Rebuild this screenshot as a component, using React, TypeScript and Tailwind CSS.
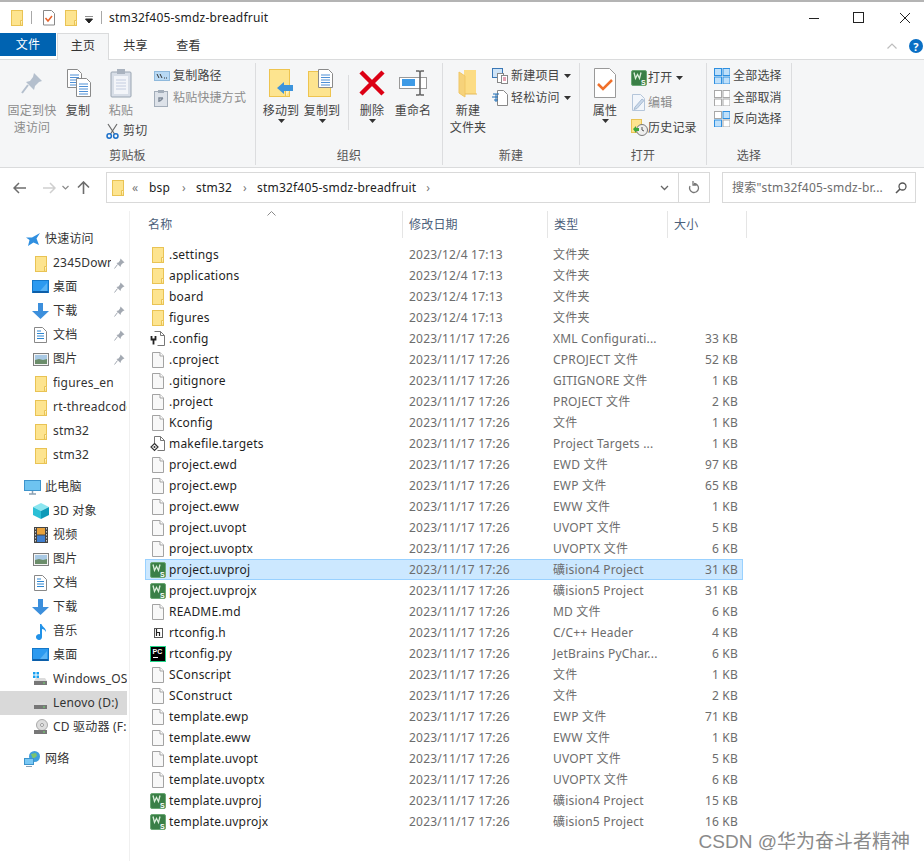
import React from 'react'

const Folder = () => (
  <svg width="14" height="17" viewBox="0 0 14 17">
    <rect x="1.5" y="1.5" width="11" height="15" fill="#fde48f" stroke="#e9c354" />
    <path d="M10.5 16.5v-5h2" fill="#fff3c4" stroke="#e9c354" />
  </svg>
)

const FileIco = () => (
  <svg width="14" height="17" viewBox="0 0 14 17">
    <path d="M1.5 1.5h7.5l3.5 3.5v11.5h-11z" fill="#f8f8f8" stroke="#a3a3a3" />
    <path d="M9 1.5v3.5h3.5" fill="#fff" stroke="#a3a3a3" />
  </svg>
)

const ConfigIco = () => (
  <svg width="16" height="17" viewBox="0 0 16 17">
    <path d="M4.5 1.5h6l4 4v10h-7" fill="#fff" stroke="#777" />
    <path d="M10.5 1.5v4h4" fill="none" stroke="#777" />
    <path d="M1.5 6v3.5h4V6M3.5 9.5v5" fill="none" stroke="#222" strokeWidth="1.8" />
  </svg>
)

const MakeIco = () => (
  <svg width="16" height="17" viewBox="0 0 16 17">
    <path d="M4.5 8V1.5h6l4 4v10h-7" fill="#fff" stroke="#777" />
    <path d="M10.5 1.5v4h4" fill="none" stroke="#777" />
    <path d="M4.5 8.5l3.5 3.5-3.5 3.5-3.5-3.5z" fill="#fff" stroke="#333" strokeWidth="1.2" />
    <circle cx="4.5" cy="12" r="1" fill="#333" />
  </svg>
)

const HeaderIco = () => (
  <svg width="14" height="17" viewBox="0 0 14 17">
    <rect x="3.5" y="4.5" width="8" height="9" fill="#fff" stroke="#555" />
    <path d="M5.5 5v7M5.5 8.5h3v3.5" fill="none" stroke="#222" strokeWidth="1.2" />
  </svg>
)

const PcIco = () => (
  <svg width="16" height="16" viewBox="0 0 16 16">
    <rect x="0.5" y="0.5" width="15" height="15" fill="#000" stroke="#21d789" />
    <text x="2.5" y="8" fontSize="7" fontWeight="700" fill="#fff" fontFamily="Liberation Sans">PC</text>
    <rect x="3" y="11" width="5" height="1" fill="#fff" />
  </svg>
)

const KeilIco = () => (
  <svg width="16" height="16" viewBox="0 0 16 16">
    <rect x="0.5" y="0.5" width="15" height="15" rx="1.5" fill="#3a7f46" stroke="#6aa874" />
    <path d="M3 2.5l1.500 6 2-4 2 4 1.500-6" fill="none" stroke="#dcefdc" strokeWidth="1.300" />
    <text x="10" y="14.500" fontSize="7" fontWeight="700" fill="#fff" fontFamily="Liberation Sans">S</text>
  </svg>
)

const SmallFolderBig = ({ children }: { children?: React.ReactNode }) => (
  <svg width="30" height="30" viewBox="0 0 30 30">
    <rect x="3.5" y="1.5" width="20" height="27" fill="#fde48f" stroke="#eec44f" />
    <path d="M19.5 28.5v-6h4" fill="#fff3c4" stroke="#eec44f" />
    {children}
  </svg>
)

const Pin = ({ color = '#b4bfcd', size = 22 }: { color?: string; size?: number }) => (
  <svg width={size} height={size} viewBox="0 0 22 22">
    <path d="M13 1l8 8-3 1-4 4-1 4-8-8 4-1 3-4z" fill={color} />
    <path d="M7 13l-6 8" stroke={color} strokeWidth="2" />
  </svg>
)

const TinyPin = () => <Pin color="#a3a9b2" size={11} />

const PageLines = ({ x, y }: { x: number; y: number }) => (
  <g transform={`translate(${x} ${y})`}>
    <path d="M.5.5h10l4 4v14H.5z" fill="#fff" stroke="#8a8a8a" />
    <path d="M3 6h9M3 8.5h9M3 11h9M3 13.5h9M3 16h9" stroke="#4d8fd6" />
  </g>
)

const CopyIco = () => (
  <svg width="26" height="30" viewBox="0 0 26 30" className="ml-[2px]">
    <PageLines x={1} y={1} />
    <PageLines x={10} y={10} />
  </svg>
)

const PasteIco = () => (
  <svg width="22" height="30" viewBox="0 0 22 30">
    <rect x="1" y="4" width="20" height="25" rx="1" fill="#d8dee7" stroke="#9aa5b2" />
    <rect x="4" y="8" width="14" height="18" fill="#f3f5f9" />
    <path d="M6 12h10M6 15h10M6 18h10M6 21h10" stroke="#c4cde0" />
    <rect x="7" y="1" width="8" height="5" fill="#aab3bf" />
  </svg>
)

const Scissors = () => (
  <svg width="13" height="16" viewBox="0 0 13 16" className="shrink-0">
    <path d="M2 1l6.5 10M11 1L4.5 11" stroke="#6b6b6b" strokeWidth="1.2" fill="none" />
    <circle cx="3.2" cy="13" r="2.2" fill="none" stroke="#1a6fc9" strokeWidth="1.5" />
    <circle cx="9.8" cy="13" r="2.2" fill="none" stroke="#1a6fc9" strokeWidth="1.5" />
  </svg>
)

const PathIco = () => (
  <svg width="16" height="10" viewBox="0 0 16 10">
    <rect x=".5" y=".5" width="15" height="9" fill="#b8d9f4" stroke="#8fb9dc" />
    <path d="M3 3l2 4M6 3l2 4" stroke="#333" />
    <path d="M10 7h1M12 7h1" stroke="#333" />
  </svg>
)

const ShortcutIco = () => (
  <svg width="14" height="17" viewBox="0 0 14 17">
    <rect x=".5" y="1.5" width="13" height="15" fill="#dde2e9" stroke="#a3adb9" />
    <rect x="4" y="0" width="6" height="3" fill="#a3adb9" />
    <path d="M5 12V8h4M9 8L6 11" stroke="#7f8a98" strokeWidth="1.5" fill="none" />
  </svg>
)

const MoveIco = () => (
  <SmallFolderBig>
    <path d="M11 20l7-6v3h9v6h-9v3z" fill="#3d94dc" />
  </SmallFolderBig>
)

const CopyToIco = () => (
  <svg width="30" height="30" viewBox="0 0 30 30">
    <rect x="1.5" y="3.5" width="22" height="25" fill="#fde48f" stroke="#eec44f" />
    <PageLines x={11} y={1} />
  </svg>
)

const DeleteIco = () => (
  <svg width="28" height="28" viewBox="0 0 28 28">
    <path d="M3 3l22 22M25 3L3 25" stroke="#dc0014" strokeWidth="4.5" />
  </svg>
)

const RenameIco = () => (
  <svg width="30" height="28" viewBox="0 0 30 28">
    <rect x="1.5" y="8.5" width="27" height="11" fill="#fff" stroke="#999" />
    <rect x="4" y="10" width="13" height="7" fill="#3f9be6" />
    <path d="M18 2h3l1 1 1-1h3M22 3v22M18 26h3l1-1 1 1h3" fill="none" stroke="#666" strokeWidth="1.6" />
  </svg>
)

const NewFolderIco = () => (
  <svg width="20" height="30" viewBox="0 0 20 30">
    <path d="M6 2h12v24H6z" fill="#fcdc84" />
    <path d="M1 4l6 4v21l-6-4z" fill="#f6d27a" stroke="#f0c766" />
    <path d="M7 26h12" stroke="#e6bb5b" />
  </svg>
)

const NewItemIco = () => (
  <svg width="16" height="16" viewBox="0 0 16 16">
    <rect x=".5" y=".5" width="10" height="9" fill="#cfe4f7" stroke="#3a77b5" />
    <rect x="5.5" y="5.5" width="6" height="9" fill="#fff" stroke="#888" />
    <rect x="9.5" y="7.5" width="6" height="8" fill="#fff" stroke="#888" />
    <path d="M11 10h3M11 12h3" stroke="#c46" />
  </svg>
)

const EasyIco = () => (
  <svg width="16" height="16" viewBox="0 0 16 16">
    <path d="M5.5.5h6l4 4v11h-10z" fill="#fff" stroke="#888" />
    <path d="M1 4h6M0 7h6M2 10h4M4 4v8" stroke="#1d6cb5" />
  </svg>
)

const PropIco = () => (
  <svg width="22" height="30" viewBox="0 0 22 30">
    <path d="M.5.5h15l6 6v23H.5z" fill="#fff" stroke="#999" />
    <path d="M4 16l5 5 9-9" fill="none" stroke="#f0702a" strokeWidth="2.5" />
  </svg>
)

const EditIco = () => (
  <svg width="15" height="17" viewBox="0 0 15 17">
    <path d="M1.5.5h8l4 4v12h-12z" fill="#f2f6fb" stroke="#b5c6da" />
    <path d="M4 13l7-8 2 1.5-7 8-3 1z" fill="#c9d8ea" stroke="#a9bdd4" />
  </svg>
)

const HistoryIco = () => (
  <svg width="17" height="17" viewBox="0 0 17 17">
    <rect x=".5" y=".5" width="10" height="13" fill="#fde48f" stroke="#e9c354" />
    <circle cx="11" cy="11" r="5.5" fill="#eee" stroke="#777" />
    <path d="M11 8v3l2 1" fill="none" stroke="#555" />
    <path d="M2 10l3-3v2h3v3H5v2z" fill="#3ca63c" />
  </svg>
)

const Grid4 = ({ on }: { on: boolean[] }) => (
  <svg width="16" height="16" viewBox="0 0 16 16">
    {[[0, 0], [8.5, 0], [0, 8.5], [8.5, 8.5]].map(([x, y], i) => (
      <rect
        key={i}
        x={x + 0.5}
        y={y + 0.5}
        width="7"
        height="7"
        fill={on[i] ? '#bfe0fa' : '#fff'}
        stroke={on[i] ? '#2e8fe0' : '#a8a8a8'}
      />
    ))}
  </svg>
)

const Caret = () => (
  <svg width="7" height="4" viewBox="0 0 7 4" className="shrink-0">
    <path d="M0 0h7L3.5 4z" fill="#333" />
  </svg>
)

// 侧边栏图标
const Star = () => (
  <svg width="15" height="15" viewBox="0 0 15 15" className="ml-[2px]">
    <path d="M14 1l-3.5 5.5L13 13l-5.5-2.5L2 14l1.5-6L0 5.5h6z" fill="#2f8fe0" />
  </svg>
)
const Desktop = () => (
  <svg width="17" height="14" viewBox="0 0 17 14" className="shrink-0">
    <rect x=".5" y=".5" width="16" height="12" fill="#2c9af0" stroke="#1477c8" />
    <path d="M1 12h15" stroke="#0d5ea8" strokeWidth="2" />
    <path d="M8 11l7-8v8z" fill="#5ab4f5" />
  </svg>
)
const Download = () => (
  <svg width="17" height="16" viewBox="0 0 17 16" className="shrink-0">
    <path d="M6 0h5v8h6l-8.500 8L0 8h6z" fill="#3c8fdc" />
  </svg>
)
const DocIco = () => (
  <svg width="13" height="16" viewBox="0 0 13 16">
    <path d="M.5.5h8l4 4v11H.5z" fill="#fff" stroke="#888" />
    <path d="M3 4h4M3 6.500h7M3 9h7M3 11.500h7" stroke="#2e86d1" />
  </svg>
)
const PicIco = () => (
  <svg width="16" height="13" viewBox="0 0 16 13">
    <rect x=".5" y=".5" width="15" height="12" fill="#f4f4f4" stroke="#808080" />
    <rect x="2" y="2" width="12" height="5" fill="#a9c9e4" />
    <path d="M2 7l4-1 4 1 4-1v5H2z" fill="#6b8d6a" />
  </svg>
)
const PcMonitor = () => (
  <svg width="17" height="15" viewBox="0 0 17 15">
    <rect x=".5" y=".5" width="16" height="10" fill="#6ec3f0" stroke="#3d94cc" />
    <path d="M5 14h7M8.500 11v3" stroke="#8aa0b3" strokeWidth="1.500" />
  </svg>
)
const Cube = () => (
  <svg width="16" height="16" viewBox="0 0 16 16">
    <path d="M8 0l8 4-8 4-8-4z" fill="#8ce6f0" />
    <path d="M0 4l8 4v8l-8-4z" fill="#2bbfd6" />
    <path d="M16 4l-8 4v8l8-4z" fill="#0e9ab8" />
  </svg>
)
const Film = () => (
  <svg width="14" height="16" viewBox="0 0 14 16">
    <rect width="14" height="16" fill="#444" />
    <rect x="3" y="1" width="8" height="6.500" fill="#e8a23c" />
    <rect x="3" y="8.500" width="8" height="6.500" fill="#3f7fd0" />
    <path d="M1.500 1v14M12.500 1v14" stroke="#ccc" strokeDasharray="1.500 1.500" />
  </svg>
)
const Note = () => (
  <svg width="12" height="17" viewBox="0 0 12 17">
    <path d="M5 1h1.500c.5 3 5 4 4.500 8-1-2-2.500-3-4-3v8a3 3 0 1 1-2-2.800z" fill="#2192e8" />
  </svg>
)
const Drive = ({ win }: { win?: boolean }) => (
  <svg width="15" height="14" viewBox="0 0 15 14">
    {win && (
      <g fill="#18a0f0">
        <rect x="0" y="0" width="2.500" height="2.500" />
        <rect x="3.500" y="0" width="2.500" height="2.500" />
        <rect x="0" y="3.500" width="2.500" height="2.500" />
        <rect x="3.500" y="3.500" width="2.500" height="2.500" />
      </g>
    )}
    <path d="M1 9l2-3h9l2 3z" fill="#dcdcdc" />
    <rect x="1" y="9" width="13" height="4" fill="#777" />
    <rect x="10" y="10.500" width="2" height="1" fill="#6fdc6f" />
  </svg>
)
const Cd = () => (
  <svg width="15" height="16" viewBox="0 0 15 16">
    <circle cx="9" cy="6" r="5.500" fill="#ddd" stroke="#aaa" />
    <circle cx="9" cy="6" r="1.500" fill="#fff" stroke="#999" />
    <rect x="1" y="11" width="13" height="4" fill="#777" />
    <rect x="10" y="12.500" width="2" height="1" fill="#6fdc6f" />
  </svg>
)
const Network = () => (
  <svg width="17" height="16" viewBox="0 0 17 16">
    <circle cx="10.500" cy="5.500" r="5.500" fill="#3f9fdc" />
    <path d="M7 3l5-1 1 3-4 3z" fill="#7cc46e" />
    <rect x=".5" y="7.500" width="9" height="6" fill="#7ac8f4" stroke="#3d94cc" />
    <path d="M2 15.500h6" stroke="#8aa0b3" />
  </svg>
)

type Row = { name: string; date: string; type: string; size: string; icon: React.ReactNode }

const d1 = '2023/12/4 17:13'
const d2 = '2023/11/17 17:26'
const rows: Row[] = [
  { name: '.settings', date: d1, type: '文件夹', size: '', icon: <Folder /> },
  { name: 'applications', date: d1, type: '文件夹', size: '', icon: <Folder /> },
  { name: 'board', date: d1, type: '文件夹', size: '', icon: <Folder /> },
  { name: 'figures', date: d1, type: '文件夹', size: '', icon: <Folder /> },
  { name: '.config', date: d2, type: 'XML Configurati...', size: '33 KB', icon: <ConfigIco /> },
  { name: '.cproject', date: d2, type: 'CPROJECT 文件', size: '52 KB', icon: <FileIco /> },
  { name: '.gitignore', date: d2, type: 'GITIGNORE 文件', size: '1 KB', icon: <FileIco /> },
  { name: '.project', date: d2, type: 'PROJECT 文件', size: '2 KB', icon: <FileIco /> },
  { name: 'Kconfig', date: d2, type: '文件', size: '1 KB', icon: <FileIco /> },
  { name: 'makefile.targets', date: d2, type: 'Project Targets ...', size: '1 KB', icon: <MakeIco /> },
  { name: 'project.ewd', date: d2, type: 'EWD 文件', size: '97 KB', icon: <FileIco /> },
  { name: 'project.ewp', date: d2, type: 'EWP 文件', size: '65 KB', icon: <FileIco /> },
  { name: 'project.eww', date: d2, type: 'EWW 文件', size: '1 KB', icon: <FileIco /> },
  { name: 'project.uvopt', date: d2, type: 'UVOPT 文件', size: '5 KB', icon: <FileIco /> },
  { name: 'project.uvoptx', date: d2, type: 'UVOPTX 文件', size: '6 KB', icon: <FileIco /> },
  { name: 'project.uvproj', date: d2, type: '礦ision4 Project', size: '31 KB', icon: <KeilIco /> },
  { name: 'project.uvprojx', date: d2, type: '礦ision5 Project', size: '31 KB', icon: <KeilIco /> },
  { name: 'README.md', date: d2, type: 'MD 文件', size: '6 KB', icon: <FileIco /> },
  { name: 'rtconfig.h', date: d2, type: 'C/C++ Header', size: '4 KB', icon: <HeaderIco /> },
  { name: 'rtconfig.py', date: d2, type: 'JetBrains PyChar...', size: '6 KB', icon: <PcIco /> },
  { name: 'SConscript', date: d2, type: '文件', size: '1 KB', icon: <FileIco /> },
  { name: 'SConstruct', date: d2, type: '文件', size: '2 KB', icon: <FileIco /> },
  { name: 'template.ewp', date: d2, type: 'EWP 文件', size: '71 KB', icon: <FileIco /> },
  { name: 'template.eww', date: d2, type: 'EWW 文件', size: '1 KB', icon: <FileIco /> },
  { name: 'template.uvopt', date: d2, type: 'UVOPT 文件', size: '5 KB', icon: <FileIco /> },
  { name: 'template.uvoptx', date: d2, type: 'UVOPTX 文件', size: '6 KB', icon: <FileIco /> },
  { name: 'template.uvproj', date: d2, type: '礦ision4 Project', size: '15 KB', icon: <KeilIco /> },
  { name: 'template.uvprojx', date: d2, type: '礦ision5 Project', size: '16 KB', icon: <KeilIco /> },
]

function BigButton({ width, icon, label, caret, muted }: { width: string; icon: React.ReactNode; label: React.ReactNode; caret?: boolean; muted?: boolean }) {
  return (
    <div className={`flex flex-col items-center shrink-0 ${width}`}>
      <div className="h-[30px] flex items-center justify-center">{icon}</div>
      <div className={`mt-1 text-center leading-[17px] whitespace-nowrap ${muted ? 'text-[#8c8c8c]' : 'text-[#444]'}`}>{label}</div>
      {caret && <Caret />}
    </div>
  )
}

function SmallRow({ icon, label, caret, muted, height = 'h-[22px]', iconWidth = 'w-[19px]' }: { icon: React.ReactNode; label: string; caret?: boolean; muted?: boolean; height?: string; iconWidth?: string }) {
  return (
    <div className={`flex items-center ${height}`}>
      <div className={`flex justify-start shrink-0 ${iconWidth}`}>{icon}</div>
      <span className={`whitespace-nowrap ${muted ? 'text-[#8c8c8c]' : 'text-[#444]'}`}>{label}</span>
      {caret && <span className="ml-[4px]"><Caret /></span>}
    </div>
  )
}

function Group({ width, label, children, border = true }: { width: string; label: string; children: React.ReactNode; border?: boolean }) {
  return (
    <div className={`flex flex-col shrink-0 mt-[3px] h-[102px] ${width} ${border ? 'border-r border-[#dcdddf]' : ''}`}>
      <div className="flex h-[83px] pt-[5px]">{children}</div>
      <div className="text-center leading-[17px] text-[#555] mt-[1px]">{label}</div>
    </div>
  )
}

function NavItem({ icon, label, pin, indent = 2, selected }: { icon: React.ReactNode; label: string; pin?: boolean; indent?: 1 | 2; selected?: boolean }) {
  return (
    <div className={`flex items-center h-6 w-[127px] ${selected ? 'bg-[#d9d9d9]' : ''} ${indent === 1 ? 'pl-[24px]' : 'pl-[32px]'}`}>
      {indent === 1 ? (
        <div className="flex justify-start shrink-0 w-[21px]">{icon}</div>
      ) : (
        <div className="flex justify-center shrink-0 w-[17px] mr-[4px]">{icon}</div>
      )}
      <span className={`overflow-hidden whitespace-nowrap text-[#333] ${pin ? 'w-[58px]' : 'flex-1'}`}>{label}</span>
      {pin && <span className="ml-[3px]"><TinyPin /></span>}
    </div>
  )
}

export default function App() {
  return (
    <div className="relative w-[924px] h-[861px] overflow-hidden bg-white text-[12px] tracking-[0.2px] font-['Noto_Sans','Noto_Sans_CJK_SC',sans-serif]">
      {/* 标题栏 */}
      <div className="h-[33px] flex items-center border-t-2 border-[#b4b4b4] pl-[10px] pr-[13px]">
        <Folder />
        <div className="w-px h-[13px] bg-[#a8a8a8] ml-[7px] mr-[10px]" />
        <svg width="14" height="17" viewBox="0 0 14 17">
          <path d="M1.500 1.500h8l3 3v11.500h-11z" fill="#fff" stroke="#888" />
          <path d="M3.500 9l2.500 3 4-5" fill="none" stroke="#e8622a" strokeWidth="1.500" />
        </svg>
        <div className="ml-[8px]"><Folder /></div>
        <svg width="8" height="8" viewBox="0 0 8 8" className="ml-[7px] mt-1">
          <path d="M0 0h8M.5 3h7L4 7z" stroke="#222" fill="#222" />
        </svg>
        <div className="w-px h-[13px] bg-[#a8a8a8] ml-[8px] mr-[7px]" />
        <span className="text-[#222]">stm32f405-smdz-breadfruit</span>
        <div className="flex-1" />
        <svg width="12" height="12" viewBox="0 0 12 12"><path d="M1 6.500h10" stroke="#222" /></svg>
        <svg width="12" height="12" viewBox="0 0 12 12" className="ml-[33px]"><rect x=".5" y=".5" width="10" height="10" fill="none" stroke="#222" /></svg>
        <svg width="12" height="12" viewBox="0 0 12 12" className="ml-[34px]"><path d="M1 1l10 10M11 1L1 11" stroke="#222" /></svg>
      </div>

      {/* 选项卡 */}
      <div className="h-[26px] flex items-start">
        <div className="w-[56px] h-[23px] bg-[#0063b1] text-white flex items-center justify-center">文件</div>
        <div className="w-[52px] h-[27px] pb-[3px] ml-px border border-b-0 border-[#dadbdc] bg-[#f5f6f7] flex items-center justify-center text-[#333] relative z-10">主页</div>
        <div className="w-[53px] h-[25px] flex items-center justify-center text-[#333]">共享</div>
        <div className="w-[53px] h-[25px] flex items-center justify-center text-[#333]">查看</div>
        <div className="flex-1" />
        <div className="flex items-center h-[26px] pr-px">
          <svg width="10" height="6" viewBox="0 0 10 6"><path d="M.5 5.500L5 1l4.500 4.500" fill="none" stroke="#bdbdbd" strokeWidth="1.200" /></svg>
          <div className="ml-[12px] w-[14px] h-[14px] rounded-full bg-[#0a6fc4] text-white flex items-center justify-center font-bold text-[11px] leading-none">?</div>
        </div>
      </div>

      {/* 功能区 */}
      <div className="h-[109px] flex bg-[#f5f6f7] border-y border-[#dadbdc]">
        <Group width="w-[256px]" label="剪贴板">
          <div className="w-[4px] shrink-0" />
          <BigButton width="w-[56px]" icon={<Pin />} muted label={<>固定到快<br />速访问</>} />
          <BigButton width="w-[36px]" icon={<CopyIco />} label="复制" />
          <div className="flex flex-col w-[50px] shrink-0">
            <BigButton width="w-[50px]" icon={<PasteIco />} muted label="粘贴" />
            <div className="flex items-center h-[16px] mt-1 pl-[10px]">
              <Scissors />
              <span className="ml-[4px] text-[#444] whitespace-nowrap">剪切</span>
            </div>
          </div>
          <div className="pl-[8px] -mt-[3px]">
            <SmallRow icon={<PathIco />} label="复制路径" />
            <SmallRow icon={<ShortcutIco />} label="粘贴快捷方式" muted />
          </div>
        </Group>
        <Group width="w-[187px]" label="组织">
          <div className="w-[4px] shrink-0" />
          <BigButton width="w-[42px]" icon={<MoveIco />} label="移动到" caret />
          <BigButton width="w-[40px]" icon={<CopyToIco />} label="复制到" caret />
          <div className="w-px h-[55px] mt-[7px] bg-[#dcdddf] ml-[6px]" />
          <BigButton width="w-[46px]" icon={<DeleteIco />} label="删除" caret />
          <BigButton width="w-[36px]" icon={<RenameIco />} label="重命名" />
        </Group>
        <Group width="w-[137px]" label="新建">
          <div className="w-[6px] shrink-0" />
          <BigButton width="w-[38px]" icon={<NewFolderIco />} label={<>新建<br />文件夹</>} />
          <div className="pl-[5px] -mt-[3px]">
            <SmallRow icon={<NewItemIco />} label="新建项目" caret />
            <SmallRow icon={<EasyIco />} label="轻松访问" caret />
          </div>
        </Group>
        <Group width="w-[127px]" label="打开">
          <div className="w-[6px] shrink-0" />
          <BigButton width="w-[38px]" icon={<PropIco />} label="属性" caret />
          <div className="pl-[7px] -mt-[3px]">
            <SmallRow height="h-[25px]" iconWidth="w-[17px]" icon={<KeilIco />} label="打开" caret />
            <SmallRow height="h-[25px]" iconWidth="w-[17px]" icon={<EditIco />} label="编辑" muted />
            <SmallRow height="h-[25px]" iconWidth="w-[17px]" icon={<HistoryIco />} label="历史记录" />
          </div>
        </Group>
        <Group width="w-[85px]" label="选择">
          <div className="pl-[7px] -mt-[3px]">
            <SmallRow icon={<Grid4 on={[true, true, true, true]} />} label="全部选择" />
            <SmallRow height="h-[21px]" icon={<Grid4 on={[false, false, false, false]} />} label="全部取消" />
            <SmallRow icon={<Grid4 on={[false, true, true, false]} />} label="反向选择" />
          </div>
        </Group>
      </div>

      {/* 地址栏 */}
      <div className="h-[43px] flex pt-[4px]">
        <div className="w-[106px] h-[31px] flex items-center shrink-0 pl-[13px]">
          <svg width="13" height="12" viewBox="0 0 13 12"><path d="M6 1L1 6l5 5M1 6h12" fill="none" stroke="#6d6d6d" strokeWidth="1.500" /></svg>
          <svg width="13" height="12" viewBox="0 0 13 12" className="ml-[17px]"><path d="M7 1l5 5-5 5M12 6H0" fill="none" stroke="#cfcfcf" strokeWidth="1.500" /></svg>
          <svg width="7" height="5" viewBox="0 0 7 5" className="ml-[6px]"><path d="M.5 1L3.500 4l3-3" fill="none" stroke="#8a8a8a" strokeWidth="1.200" /></svg>
          <svg width="13" height="13" viewBox="0 0 13 13" className="ml-[8px]"><path d="M1 6.500L6.500 1l5.500 5.500M6.500 1v12" fill="none" stroke="#6d6d6d" strokeWidth="1.600" /></svg>
        </div>
        <div className="w-[604px] h-[31px] border border-[#d9d9d9] flex items-center shrink-0">
          <div className="flex-1 flex items-center pl-[4px] text-[#222]">
            <Folder />
            <span className="ml-[7px] text-[#777] w-[16px]">«</span>
            <span className="ml-px">bsp</span>
            <span className="ml-[12px] mr-[10px] text-[#777]">›</span>
            <span>stm32</span>
            <span className="ml-[11px] mr-[10px] text-[#777]">›</span>
            <span>stm32f405-smdz-breadfruit</span>
            <span className="ml-[10px] text-[#777]">›</span>
          </div>
          <svg width="9" height="6" viewBox="0 0 9 6" className="mr-[9px]"><path d="M1 1l3.500 3.500L8 1" fill="none" stroke="#666" strokeWidth="1.300" /></svg>
          <div className="w-[31px] h-full border-l border-[#d9d9d9] flex items-center justify-center">
            <svg width="12" height="13" viewBox="0 0 12 13"><path d="M6 2.500a4.500 4.500 0 1 1-4 2.500M5 0v4h3.500" fill="none" stroke="#777" strokeWidth="1.300" /></svg>
          </div>
        </div>
        <div className="w-[194px] h-[31px] ml-[12px] border border-[#d9d9d9] flex items-center pl-[9px] pr-[8px]">
          <span className="flex-1 text-[#6d6d6d] whitespace-nowrap">搜索"stm32f405-smdz-br...</span>
          <svg width="12" height="12" viewBox="0 0 12 12"><circle cx="7.500" cy="4.500" r="3.500" fill="none" stroke="#555" strokeWidth="1.300" /><path d="M5 7l-4 4" stroke="#555" strokeWidth="1.600" /></svg>
        </div>
      </div>

      {/* 主体 */}
      <div className="flex h-[650px]">
        <div className="w-[130px] shrink-0 border-r border-[#f0f0f0] pt-[16px]">
          <NavItem indent={1} icon={<Star />} label="快速访问" />
          <NavItem icon={<Folder />} label="2345Downloads" pin />
          <NavItem icon={<Desktop />} label="桌面" pin />
          <NavItem icon={<Download />} label="下载" pin />
          <NavItem icon={<DocIco />} label="文档" pin />
          <NavItem icon={<PicIco />} label="图片" pin />
          <NavItem icon={<Folder />} label="figures_en" />
          <NavItem icon={<Folder />} label="rt-threadcode" />
          <NavItem icon={<Folder />} label="stm32" />
          <NavItem icon={<Folder />} label="stm32" />
          <div className="h-2" />
          <NavItem indent={1} icon={<PcMonitor />} label="此电脑" />
          <NavItem icon={<Cube />} label="3D 对象" />
          <NavItem icon={<Film />} label="视频" />
          <NavItem icon={<PicIco />} label="图片" />
          <NavItem icon={<DocIco />} label="文档" />
          <NavItem icon={<Download />} label="下载" />
          <NavItem icon={<Note />} label="音乐" />
          <NavItem icon={<Desktop />} label="桌面" />
          <NavItem icon={<Drive win />} label="Windows_OS (C:)" />
          <NavItem icon={<Drive />} label="Lenovo (D:)" selected />
          <NavItem icon={<Cd />} label="CD 驱动器 (F:)" />
          <div className="h-2" />
          <NavItem indent={1} icon={<Network />} label="网络" />
        </div>

        <div className="pl-[15px]">
          <div className="flex h-[27px] text-[#4c607a] w-[602px]">
            <div className="relative w-[258px] pl-[3px] flex items-center border-r border-[#e5e5e5]">
              名称
              <svg width="9" height="5" viewBox="0 0 9 5" className="absolute left-[122px] top-0"><path d="M.5 4.500l4-4 4 4" fill="none" stroke="#8a8a8a" /></svg>
            </div>
            <div className="w-[145px] pl-[6px] flex items-center border-r border-[#e5e5e5]">修改日期</div>
            <div className="w-[120px] pl-[6px] flex items-center border-r border-[#e5e5e5]">类型</div>
            <div className="w-[79px] pl-[6px] flex items-center border-r border-[#e5e5e5]">大小</div>
          </div>
          <div className="mt-[6px] w-[598px]">
            {rows.map((r) => (
              <div
                key={r.name}
                className={`grid grid-cols-[264px_144px_120px_68px] h-[21px] items-center border ${r.name === 'project.uvproj' ? 'bg-[#cce8ff] border-[#99d1ff]' : 'border-transparent'}`}
              >
                <div className="flex items-center pl-[4px]">
                  <div className="w-[17px] h-[17px] flex items-center justify-center shrink-0 -ml-[1px] mr-[3px]">{r.icon}</div>
                  <span className="text-[#1f1f1f] whitespace-nowrap">{r.name}</span>
                </div>
                <div className="text-[#6d6d6d] -ml-px">{r.date}</div>
                <div className="text-[#6d6d6d] -ml-px whitespace-nowrap">{r.type}</div>
                <div className="text-[#6d6d6d] text-right pr-[4px]">{r.size}</div>
              </div>
            ))}
          </div>
        </div>
      </div>

      {/* 水印 */}
      <div className="absolute right-[14px] top-[829px] text-[19px] tracking-normal leading-[26px] text-[#8a8a8a] whitespace-nowrap font-['Liberation_Sans','Noto_Sans_CJK_SC',sans-serif]">
        CSDN @华为奋斗者精神
      </div>
    </div>
  )
}
